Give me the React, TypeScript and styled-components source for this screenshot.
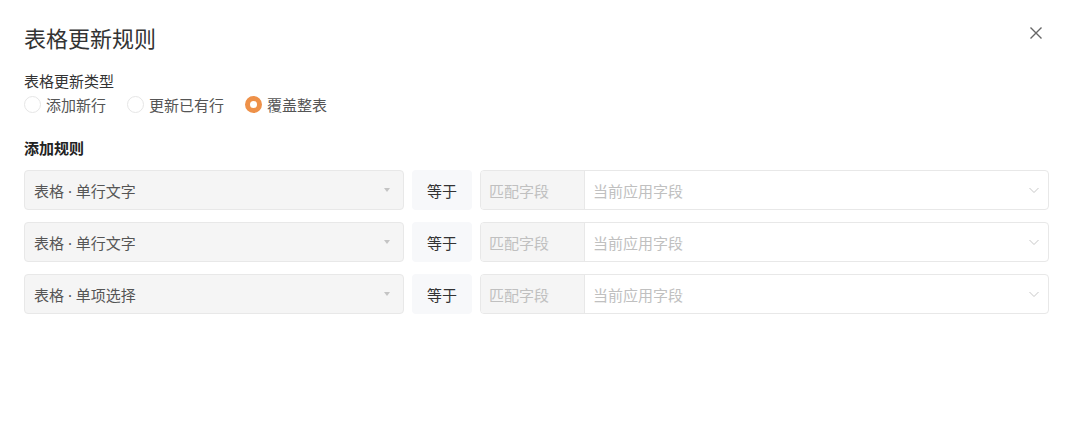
import React from 'react';
import styled, { createGlobalStyle } from 'styled-components';

/**
 * Global reset.
 */
const Global = createGlobalStyle`
    html, body {
        margin: 0;
        padding: 0;
        background: #fff;
    }
    body {
        font-family: "Noto Sans", "Noto Sans CJK SC", sans-serif;
        color: #333;
    }
`;

/**
 * Define stylesheet.
 */
const UI = styled.div`
    position: relative;
    width: 1080px;
    height: 421px;
    box-sizing: border-box;
    padding: 22px 31px 0 24px;
    background: #fff;
`;
const Title = styled.h2`
    margin: 0;
    font-size: 22px;
    font-weight: 400;
    line-height: 32px;
    color: #333;
`;
const CloseButton = styled.button`
    position: absolute;
    top: 25px;
    right: 36px;
    width: 16px;
    height: 16px;
    padding: 0;
    border: 0;
    background: transparent;
    cursor: pointer;
    svg {
        display: block;
    }
`;
const Label = styled.div<{ bold?: boolean }>`
    font-size: 15px;
    line-height: 20px;
    font-weight: ${(p) => (p.bold ? 700 : 400)};
    color: ${(p) => (p.bold ? '#222' : '#333')};
`;
const TypeLabel = styled(Label)`
    margin-top: 17px;
`;
const RuleLabel = styled(Label)`
    margin-top: 23px;
`;
const RadioGroup = styled.div`
    display: flex;
    align-items: center;
    gap: 21px;
    margin-top: 2px;
    height: 22px;
`;
const RadioItem = styled.label`
    display: flex;
    align-items: center;
    gap: 5px;
    font-size: 15px;
    color: #555;
    cursor: pointer;
`;
const RadioDot = styled.span<{ checked?: boolean }>`
    box-sizing: border-box;
    width: 17px;
    height: 17px;
    border-radius: 50%;
    border: ${(p) => (p.checked ? '5px solid #ee9149' : '1px solid #e6e6e6')};
    background: #fff;
`;
const Rules = styled.div`
    display: flex;
    flex-direction: column;
    gap: 12px;
    margin-top: 12px;
`;
const Row = styled.div`
    display: flex;
    align-items: stretch;
    height: 40px;
    gap: 8px;
`;
const Select = styled.div`
    box-sizing: border-box;
    display: flex;
    align-items: center;
    justify-content: space-between;
    width: 380px;
    padding: 0 12px 0 9px;
    background: #f5f5f5;
    border: 1px solid #e8e8e8;
    border-radius: 4px;
    font-size: 15px;
    color: #555;
`;
const Caret = styled.span`
    width: 0;
    height: 0;
    border-left: 3px solid transparent;
    border-right: 3px solid transparent;
    border-top: 4px solid #c4c4c4;
    margin-right: 1px;
`;
const Operator = styled.div`
    display: flex;
    align-items: center;
    justify-content: center;
    width: 60px;
    background: #f7f8fa;
    border-radius: 4px;
    font-size: 15px;
    color: #333;
`;
const Field = styled.div`
    box-sizing: border-box;
    flex: 1;
    display: flex;
    border: 1px solid #e8e8e8;
    border-radius: 4px;
    overflow: hidden;
`;
const FieldAddon = styled.div`
    display: flex;
    align-items: center;
    width: 104px;
    padding-left: 8px;
    box-sizing: border-box;
    background: #f5f5f5;
    border-right: 1px solid #e8e8e8;
    font-size: 15px;
    color: #c0c0c0;
`;
const FieldInput = styled.div`
    flex: 1;
    display: flex;
    align-items: center;
    justify-content: space-between;
    padding: 0 8px 0 8px;
    font-size: 15px;
    color: #c0c0c0;
    svg {
        display: block;
    }
`;

/**
 * Data.
 */
const radios = [
    { label: '添加新行', checked: false },
    { label: '更新已有行', checked: false },
    { label: '覆盖整表', checked: true }
];
const rules = ['表格 · 单行文字', '表格 · 单行文字', '表格 · 单项选择'];

function Chevron() {
    return (
        <svg width="12" height="12" viewBox="0 0 12 12" fill="none">
            <path d="M1.5 4 L6 8.5 L10.5 4" stroke="#c8c8c8" strokeWidth="1" />
        </svg>
    );
}

export default function App() {
    return (
        <>
            <Global />
            <UI>
                <Title>表格更新规则</Title>
                <CloseButton aria-label="关闭">
                    <svg width="16" height="16" viewBox="0 0 16 16" fill="none">
                        <path d="M2.5 2.5 L13.5 13.5 M13.5 2.5 L2.5 13.5" stroke="#666" strokeWidth="1.4" />
                    </svg>
                </CloseButton>
                <TypeLabel>表格更新类型</TypeLabel>
                <RadioGroup>
                    {radios.map((r) => (
                        <RadioItem key={r.label}>
                            <RadioDot checked={r.checked} />
                            {r.label}
                        </RadioItem>
                    ))}
                </RadioGroup>
                <RuleLabel bold>添加规则</RuleLabel>
                <Rules>
                    {rules.map((rule, i) => (
                        <Row key={i}>
                            <Select>
                                {rule}
                                <Caret />
                            </Select>
                            <Operator>等于</Operator>
                            <Field>
                                <FieldAddon>匹配字段</FieldAddon>
                                <FieldInput>
                                    当前应用字段
                                    <Chevron />
                                </FieldInput>
                            </Field>
                        </Row>
                    ))}
                </Rules>
            </UI>
        </>
    );
}
